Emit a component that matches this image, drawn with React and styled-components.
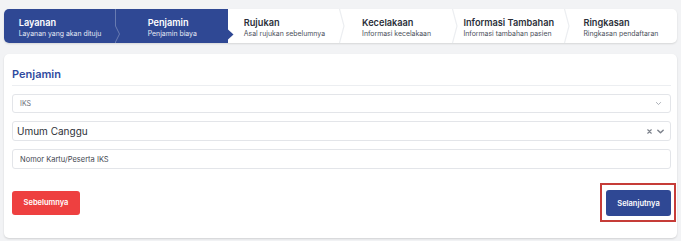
import React from "react";
import styled, { createGlobalStyle } from "styled-components";

const Global = createGlobalStyle`
  * { box-sizing: border-box; }
  body {
    margin: 0;
    background: #f2f3f5;
    font-family: Inter, "Noto Sans", sans-serif;
  }
`;

const Page = styled.div`
  padding: 9px 4px 3px 4px;
  display: flex;
  flex-direction: column;
  gap: 11px;
`;

const Stepper = styled.div`
  display: grid;
  grid-template-columns: repeat(6, 1fr);
  height: 34px;
  background: #fff;
  border-radius: 5px;
  box-shadow: 0 1px 2px rgba(0, 0, 0, 0.12);
`;

const Step = styled.div`
  position: relative;
  display: flex;
  align-items: center;
  justify-content: center;
  background: ${(p) => (p.$active ? "#2f4894" : "transparent")};
  border-radius: ${(p) => (p.$first ? "5px 0 0 5px" : "0")};
  padding-top: 3px;
`;

const StepText = styled.div`
  display: flex;
  flex-direction: column;
  gap: 1px;
`;

const StepTitle = styled.div`
  font-size: 9.2px;
  font-weight: 600;
  line-height: 11px;
  color: ${(p) => (p.$active ? "#fff" : "#2b2f3a")};
`;

const StepSub = styled.div`
  font-size: 6.9px;
  line-height: 9px;
  color: ${(p) => (p.$active ? "#e6eaf5" : "#4a4f5a")};
  white-space: nowrap;
`;

const Sep = styled.svg`
  position: absolute;
  top: 0;
  left: -1px;
  width: 7px;
  height: 34px;
  overflow: visible;
`;

const ArrowTip = styled.svg`
  position: absolute;
  top: 0;
  right: -6px;
  width: 6px;
  height: 34px;
  z-index: 1;
`;

const Card = styled.div`
  background: #fff;
  border-radius: 5px;
  box-shadow: 0 1px 2px rgba(0, 0, 0, 0.14);
  padding: 13px 6px 16px 8px;
  display: flex;
  flex-direction: column;
`;

const Title = styled.div`
  font-size: 11px;
  font-weight: 600;
  line-height: 14px;
  color: #2f4ba0;
  padding-bottom: 4px;
  border-bottom: 1px solid #eceef1;
  margin-bottom: 8px;
`;

const Fields = styled.div`
  display: flex;
  flex-direction: column;
  gap: 8px;
`;

const Field = styled.div`
  height: ${(p) => p.$h || 20}px;
  border: 1px solid #e3e5e9;
  border-radius: 3px;
  display: flex;
  align-items: center;
  padding: 0 ${(p) => p.$pr || 8}px 0 ${(p) => p.$pl || 7}px;
  justify-content: space-between;
`;

const FieldText = styled.span`
  font-size: ${(p) => p.$size || 7.5}px;
  color: ${(p) => p.$color || "#555a64"};
`;

const Icons = styled.div`
  display: flex;
  align-items: center;
  gap: 3px;
`;

const Actions = styled.div`
  margin-top: 14px;
  height: 39px;
  margin-right: -5px;
  display: flex;
  align-items: center;
  justify-content: space-between;
`;

const Highlight = styled.div`
  border: 2px solid #c63c38;
  padding: 5px 3px 4px 4px;
  display: flex;
`;

const Button = styled.button`
  border: none;
  border-radius: 3px;
  color: #fff;
  font-family: Inter, "Noto Sans", sans-serif;
  font-weight: 600;
  font-size: 7.5px;
  height: ${(p) => p.$h}px;
  width: ${(p) => p.$w}px;
  background: ${(p) => p.$bg};
  padding: 0;
`;

const Chevron = ({ size = 7, color = "#8a8f99", w = 1.2 }) => (
  <svg width={size} height={size} viewBox="0 0 10 10">
    <path d="M2 3.5 L5 6.5 L8 3.5" fill="none" stroke={color} strokeWidth={w} strokeLinecap="round" strokeLinejoin="round" />
  </svg>
);

const Cross = () => (
  <svg width="7" height="7" viewBox="0 0 10 10">
    <path d="M2.5 2.5 L7.5 7.5 M7.5 2.5 L2.5 7.5" stroke="#7d828c" strokeWidth="1.6" strokeLinecap="round" />
  </svg>
);

const steps = [
  { t: "Layanan", s: "Layanan yang akan dituju", active: true },
  { t: "Penjamin", s: "Penjamin biaya", active: true },
  { t: "Rujukan", s: "Asal rujukan sebelumnya" },
  { t: "Kecelakaan", s: "Informasi kecelakaan" },
  { t: "Informasi Tambahan", s: "Informasi tambahan pasien" },
  { t: "Ringkasan", s: "Ringkasan pendaftaran" },
];

export default function App() {
  return (
    <>
      <Global />
      <Page>
        <Stepper>
          {steps.map((st, i) => {
            const next = steps[i + 1];
            return (
              <Step key={st.t} $active={st.active} $first={i === 0}>
                {i > 0 && st.active && (
                  <Sep viewBox="0 0 7 34">
                    <polyline points="0.5,0 0.5,17 4.5,25 0.5,33 0.5,34" fill="none" stroke="rgba(255,255,255,0.28)" strokeWidth="1" />
                  </Sep>
                )}
                {i > 0 && !st.active && !steps[i - 1].active && (
                  <Sep viewBox="0 0 7 34">
                    <polyline points="0.5,0 5,17 0.5,34" fill="none" stroke="#eceef1" strokeWidth="1.2" />
                  </Sep>
                )}
                {st.active && next && !next.active && (
                  <ArrowTip viewBox="0 0 6 34">
                    <polygon points="0,20.5 5.5,25.5 0,30.5" fill="#2f4894" />
                  </ArrowTip>
                )}
                <StepText>
                  <StepTitle $active={st.active}>{st.t}</StepTitle>
                  <StepSub $active={st.active}>{st.s}</StepSub>
                </StepText>
              </Step>
            );
          })}
        </Stepper>

        <Card>
          <Title>Penjamin</Title>
          <Fields>
            <Field $h={19}>
              <FieldText $size={7} $color="#6b7079">IKS</FieldText>
              <Icons>
                <Chevron size={7} color="#9aa0a8" />
              </Icons>
            </Field>
            <Field $pl={4} $pr={5}>
              <FieldText $size={10} $color="#2d3038">Umum Canggu</FieldText>
              <Icons>
                <Cross />
                <Chevron size={9} color="#7d828c" w={1.6} />
              </Icons>
            </Field>
            <Field>
              <FieldText $size={7.5} $color="#444851">Nomor Kartu/Peserta IKS</FieldText>
            </Field>
          </Fields>
          <Actions>
            <Button $bg="#ee4040" $w={68} $h={24}>Sebelumnya</Button>
            <Highlight>
              <Button $bg="#2f4894" $w={65} $h={26}>Selanjutnya</Button>
            </Highlight>
          </Actions>
        </Card>
      </Page>
    </>
  );
}
